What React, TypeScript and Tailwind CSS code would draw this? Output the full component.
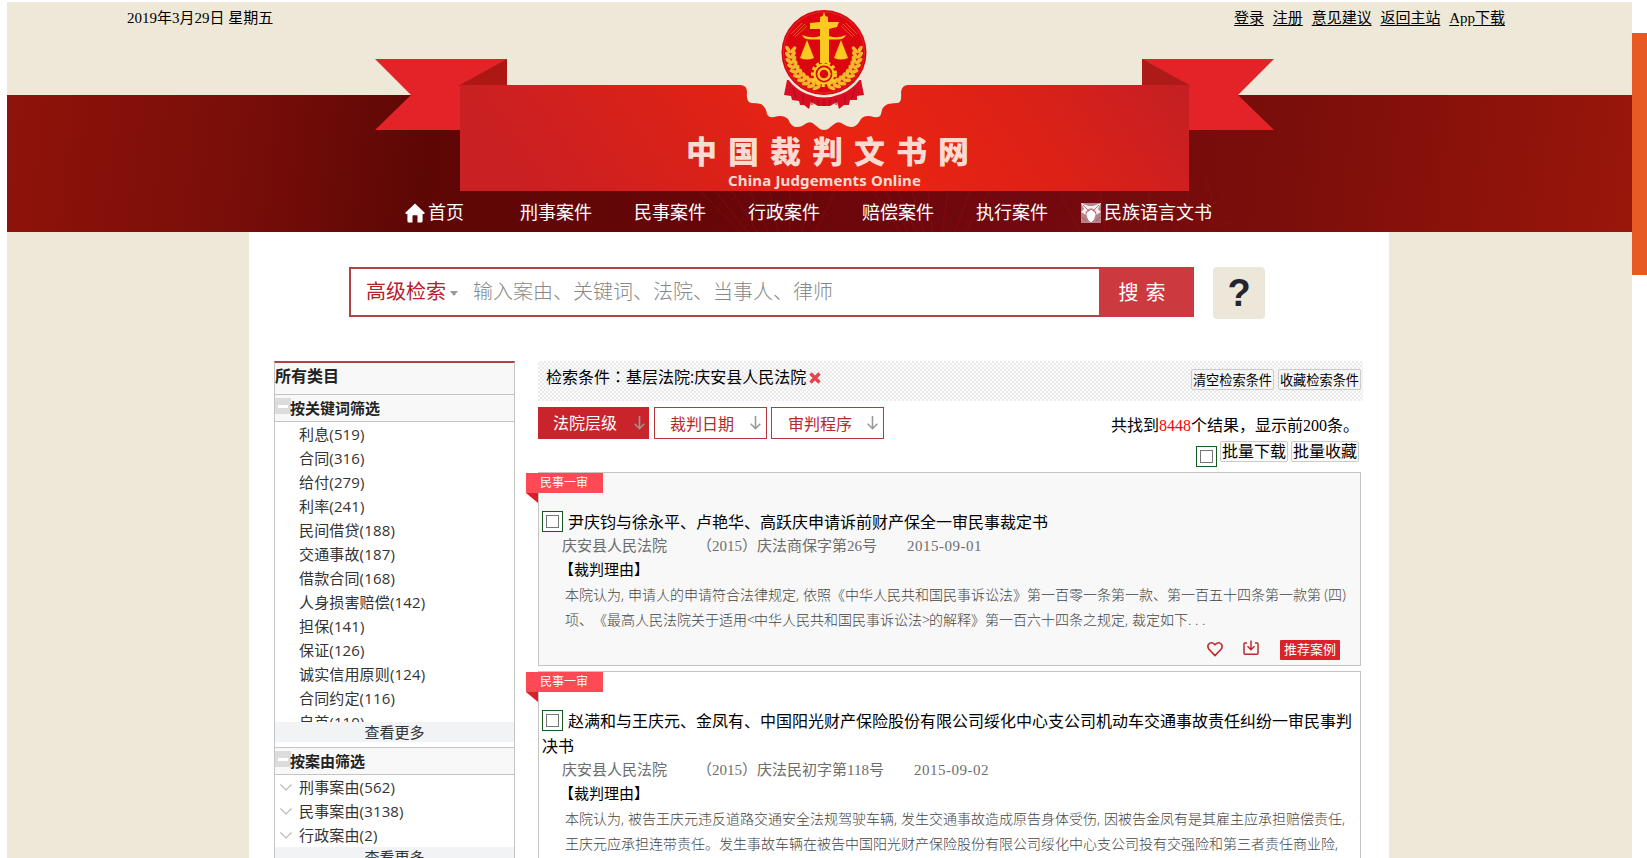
import { Fragment } from 'react';

const topLinks = ['登录', '注册', '意见建议', '返回主站', 'App下载'];

const navLinks = ['刑事案件', '民事案件', '行政案件', '赔偿案件', '执行案件'];

const keywords = [
  { name: '利息', count: 519 },
  { name: '合同', count: 316 },
  { name: '给付', count: 279 },
  { name: '利率', count: 241 },
  { name: '民间借贷', count: 188 },
  { name: '交通事故', count: 187 },
  { name: '借款合同', count: 168 },
  { name: '人身损害赔偿', count: 142 },
  { name: '担保', count: 141 },
  { name: '保证', count: 126 },
  { name: '诚实信用原则', count: 124 },
  { name: '合同约定', count: 116 },
  { name: '自首', count: 110 },
];

const causes = [
  { name: '刑事案由', count: 562 },
  { name: '民事案由', count: 3138 },
  { name: '行政案由', count: 2 },
];

const cases = [
  {
    title: ['尹庆钧与徐永平、卢艳华、高跃庆申请诉前财产保全一审民事裁定书'],
    court: '庆安县人民法院',
    number: '（2015）庆法商保字第26号',
    date: '2015-09-01',
    reason: [
      '本院认为,申请人的申请符合法律规定,依照《中华人民共和国民事诉讼法》第一百零一条第一款、第一百五十四条第一款第(四)',
      '项、《最高人民法院关于适用<中华人民共和国民事诉讼法>的解释》第一百六十四条之规定,裁定如下...',
    ],
    shaded: true,
  },
  {
    title: [
      '赵满和与王庆元、金凤有、中国阳光财产保险股份有限公司绥化中心支公司机动车交通事故责任纠纷一审民事判',
      '决书',
    ],
    court: '庆安县人民法院',
    number: '（2015）庆法民初字第118号',
    date: '2015-09-02',
    reason: [
      '本院认为,被告王庆元违反道路交通安全法规驾驶车辆,发生交通事故造成原告身体受伤,因被告金凤有是其雇主应承担赔偿责任,',
      '王庆元应承担连带责任。发生事故车辆在被告中国阳光财产保险股份有限公司绥化中心支公司投有交强险和第三者责任商业险,',
    ],
    shaded: false,
  },
];

const wheat = [0, 1, 2, 3, 4, 5, 6, 7, 8, 9];

function Emblem() {
  return (
    <g>
      {/* Drapery under the disc */}
      <path d="M787 80 L784 95 L791 96 L792 100 L799 101 L800 105 L804 105 L809 109 L811 102 L818 106 L830 106 L837 102 L839 109 L844 105 L849 105 L850 100 L857 100 L857 96 L864 95 L861 80 Z" fill="#d80f22" />
      <path d="M793 88 L796 98 M803 94 L803 103 M812 98 V105 M818 99 V105 M824 99 V106 M830 99 V105 M836 98 V105 M845 94 V103 M855 88 L852 98" stroke="#a80a1c" strokeWidth="1" fill="none" />
      <circle cx="824" cy="53" r="44.5" fill="#eee8d8" />
      <circle cx="824" cy="52.5" r="42.5" fill="#d9060f" />
      <circle cx="824" cy="52.5" r="40.5" fill="#dd0510" stroke="#e8413a" strokeWidth="0.6" />
      {/* Wheat ears */}
      {wheat.map((i) => (
        <g key={i} fill="#f3b82c">
          <ellipse cx="0" cy="0" rx="1.9" ry="4.2" transform={`translate(824 52.5) rotate(${192 + i * 9.2}) translate(0 -36) rotate(55)`} />
          <ellipse cx="0" cy="0" rx="1.9" ry="4.2" transform={`translate(824 52.5) rotate(${192 + i * 9.2}) translate(0 -31) rotate(125)`} />
          <ellipse cx="0" cy="0" rx="1.9" ry="4.2" transform={`translate(824 52.5) rotate(${168 - i * 9.2}) translate(0 -36) rotate(-55)`} />
          <ellipse cx="0" cy="0" rx="1.9" ry="4.2" transform={`translate(824 52.5) rotate(${168 - i * 9.2}) translate(0 -31) rotate(-125)`} />
        </g>
      ))}
      <path d="M793 36 L805 24 M795 37 L807 26 M791 34 L802 23 M855 36 L843 24 M853 37 L841 26 M857 34 L846 23" stroke="#ee6a28" strokeWidth="0.8" />
      {/* Pillar and scales */}
      <g fill="#fbc91f">
        <path d="M822.5 16 L824 12 L825.5 16 L828 17 V22 H834 L839 22 L837 27 L829 29 V63 H820 V29 L810 29 V23 L820 22 V17 Z" />
        <path d="M802 35 Q812 39 820 36 H829 Q837 39 846 35 Q844 40 836 39.5 H812 Q804 40 802 35 Z" />
        <path d="M807 40 L800 58 Q807 61 814 58 Z" />
        <path d="M841 40 L834 58 Q841 61 848 58 Z" />
      </g>
      <circle cx="824" cy="74" r="11.5" fill="none" stroke="#fbc91f" strokeWidth="3" strokeDasharray="3.2 2.5" />
      <circle cx="824" cy="74" r="9.5" fill="#dd0510" stroke="#fbc91f" strokeWidth="2.2" />
      <circle cx="824" cy="74" r="5.5" fill="#dd0510" stroke="#fbc91f" strokeWidth="2.4" />
    </g>
  );
}

function Ribbon() {
  return (
    <svg className="absolute top-0 left-0" width="1625" height="230" viewBox="7 2 1625 230" aria-hidden="true">
      <defs>
        <linearGradient id="ribbonBody" x1="0" x2="1" y1="0.1" y2="0">
          <stop offset="0" stopColor="#c92023" />
          <stop offset="0.25" stopColor="#d92119" />
          <stop offset="0.5" stopColor="#ea2411" />
          <stop offset="0.75" stopColor="#dc2117" />
          <stop offset="1" stopColor="#c41f24" />
        </linearGradient>
      </defs>
      {/* Faint firework rays */}
      <g stroke="#a3121a" strokeWidth="1" opacity="0.35">
        <path d="M700 191 L740 232 M715 191 L748 232 M732 191 L757 232 M750 191 L768 232 M770 191 L778 232 M790 191 V232 M812 191 L802 232 M835 191 L815 232" />
        <path d="M872 191 L900 232 M885 191 L908 232 M898 191 L916 232 M912 191 L924 232 M928 191 L932 232 M948 191 L942 232 M970 191 L955 232 M990 191 L965 232" />
        <path d="M1060 195 L1080 232 M1100 191 L1105 232 M1150 191 L1145 232 M1190 195 L1175 232 M1205 178 L1212 200 M1225 195 L1205 215 M1232 222 L1210 228" />
      </g>
      <path d="M375 59 H507 V86 H470 V130 H375 L411 95 Z" fill="#e32328" />
      <path d="M1274 59 H1142 V86 H1180 V130 H1274 L1238 95 Z" fill="#e32328" />
      <path d="M507 59 V86 H458 Z" fill="#ad1815" />
      <path d="M1142 59 V86 H1191 Z" fill="#ad1a18" />
      {/* Toothed notch around the emblem */}
      <rect x="740" y="84" width="168" height="60" fill="#eee8d8" />
      <path
        d="M460 85 H740 Q747 85 747 92 Q746 102 751 103 Q757 103 761 104 Q766 107 767 114 Q769 118 774 117 Q783 114 788 119 Q792 128 797 127 Q802 127 805 124 Q811 120 815 125 L820 129 Q824 131 828 129 L833 125 Q838 120 843 124 Q847 127 851 127 Q856 128 861 119 Q865 114 874 117 Q880 118 881 114 Q882 106 888 104 Q894 103 898 103 Q902 102 901 92 Q902 85 908 85 H1189 V191 H460 Z"
        fill="url(#ribbonBody)"
      />
      <Emblem />
    </svg>
  );
}

function HomeIcon() {
  return (
    <svg width="20" height="20" viewBox="0 0 20 20" fill="#fff">
      <path d="M10 0.5 L20 10 L18.8 11 H17.6 V18 Q17.6 19.5 16 19.5 H12.5 V13 Q12.5 12.3 11.8 12.3 H8.2 Q7.5 12.3 7.5 13 V19.5 H4 Q2.4 19.5 2.4 18 V11 H1.2 L0 10 Z" />
    </svg>
  );
}

function EthnicIcon() {
  return (
    <svg width="20" height="20" viewBox="0 0 20 20">
      <rect width="20" height="20" fill="#b5838a" />
      <path d="M0 0 L8 3 L12 3 L20 0 L17 6 L20 9 L15 12 L10 6 L5 12 L0 9 L3 6 Z" fill="#f8ecec" />
      <path d="M5 12 Q5 6 10 6 Q15 6 15 12 Q14 18 10 20 Q6 18 5 12 Z" fill="#fff" stroke="#a85560" strokeWidth="0.7" />
      <path d="M2 2 L8 8 M18 2 L12 8 M5 10 L10 6 L15 10 M1 14 L5 18 M19 14 L15 18" stroke="#a04450" strokeWidth="0.7" fill="none" />
    </svg>
  );
}

function CheckBox() {
  return (
    <span className="flex h-[21px] w-[21px] shrink-0 items-center justify-center border border-[#16591c] bg-white">
      <span className="h-[13px] w-[13px] border border-[#777]" />
    </span>
  );
}

function DownArrow() {
  return (
    <svg width="11" height="14" viewBox="0 0 11 14" fill="none" stroke="#999" strokeWidth="1.6">
      <path d="M5.5 0 V12.5 M0.7 7.7 L5.5 12.7 L10.3 7.7" />
    </svg>
  );
}

function GroupTitle({ children }: { children: string }) {
  return (
    <div className="flex h-[28px] border-y border-[#c4c4c4] bg-[#f8f8f8]">
      <span className="mt-[3px] flex h-4 w-4 items-center justify-center bg-[#dcdcdc]">
        <span className="h-[3px] w-[10px] bg-white" />
      </span>
      <h3 className="-ml-px text-[15px] leading-[26px] font-bold text-[#222]">{children}</h3>
    </div>
  );
}

function MoreBar() {
  return <div className="h-5 bg-[#f2f3f5] text-center text-[15px] leading-[20px] text-[#333]">查看更多</div>;
}

// ASCII punctuation takes exactly half of a Chinese character
function HalfWidth({ text }: { text: string }) {
  return (
    <>
      {text.split(/([,()<>.])/).map((part, i) =>
        i % 2 ? (
          <span key={i} className={`inline-block w-[0.5em] ${part === '(' ? 'text-right' : ''}`}>{part}</span>
        ) : (
          <Fragment key={i}>{part}</Fragment>
        ),
      )}
    </>
  );
}

function CaseCard({ item }: { item: (typeof cases)[number] }) {
  return (
    <article className={`relative w-[823px] border border-[#c4c4c4] ${item.shaded ? 'h-[194px] bg-[#f8f8f8]' : 'h-[240px] bg-white'}`}>
      <div className="absolute top-0 -left-[13px]">
        <div className="h-5 w-[77px] bg-[#ff4a56] pl-[14px] text-[12px] leading-[19px] text-white">民事一审</div>
        <svg width="12" height="10" viewBox="0 0 12 10">
          <path d="M0 0 H12 V10 Z" fill="#d81e2b" />
        </svg>
      </div>
      <h2 className="pt-[36px] pl-[3px] text-[16px] leading-[25px] whitespace-nowrap text-black">
        <span className="flex h-[26px] items-center gap-[5px]">
          <span className="mb-[2px]"><CheckBox /></span>
          {item.title[0]}
        </span>
        {item.title[1] && <span className="block">{item.title[1]}</span>}
      </h2>
      <div className="flex h-[21px] gap-[30px] pl-[23px] font-['Liberation_Serif','Noto_Sans_CJK_SC',serif] text-[15px] leading-[23px] text-[#6d6d6d] [text-spacing-trim:space-all]">
        <span>{item.court}</span>
        <span>{item.number}</span>
        <span className="tracking-[0.5px]">{item.date}</span>
      </div>
      <div className="pl-[20px] text-[15px] leading-[26px] text-black">【裁判理由】</div>
      <div className="pl-[26px] text-[14px] leading-[25px] font-light whitespace-nowrap text-[#444] [text-spacing-trim:space-all]">
        {item.reason.map((line) => (
          <p key={line}><HalfWidth text={line} /></p>
        ))}
      </div>
      {item.shaded && (
        <div className="mt-[8px] flex h-5 items-center justify-end pr-[20px]">
          <svg className="mr-[20px] mb-[2px]" width="16" height="16" viewBox="0 0 16 16" fill="none" stroke="#c0272d" strokeWidth="1.6">
            <path d="M8 14.6 L2 8.3 Q0 5.6 1.6 3.2 Q4.6 0 8 3.8 Q11.4 0 14.4 3.2 Q16 5.6 14 8.3 Z" />
          </svg>
          <svg className="mr-[21px] mb-[4px]" width="16" height="16" viewBox="0 0 16 16" fill="none" stroke="#c0272d" strokeWidth="1.5">
            <path d="M4 3 H1.8 Q1 3 1 4 V13.2 Q1 14.2 2 14.2 H14 Q15 14.2 15 13.2 V4 Q15 3 14.2 3 H12 M8 0.5 V9.5 M4.5 6.3 L8 9.8 L11.5 6.3" />
          </svg>
          <span className="h-5 w-[60px] rounded-[1px] bg-[#d9222a] text-center text-[13px] leading-[19px] text-white">推荐案例</span>
        </div>
      )}
    </article>
  );
}

export default function App() {
  return (
    <div className="flex h-[858px] w-[1647px] overflow-hidden bg-white pt-[2px] pl-[7px] font-['Open_Sans','Noto_Sans_CJK_SC',sans-serif]">
      <div className="h-[856px] w-[1625px] shrink-0 bg-[#eee8d8]">
        <header className="relative h-[230px]">
          <div className="flex h-[93px] justify-between pt-[5px] pr-[127px] pl-[120px] font-['Liberation_Serif','Noto_Sans_CJK_SC',serif] text-[15px] leading-[22px] text-black">
            <span>2019年3月29日 星期五</span>
            <div className="flex gap-[8.75px]">
              {topLinks.map((link) => (
                <a key={link} href="#" className="underline underline-offset-2">{link}</a>
              ))}
            </div>
          </div>
          <div className="h-[137px] bg-[linear-gradient(97deg,#8f130a_0%,#7a0e09_14%,#5d0705_26%,#680609_45%,#720810_62%,#7a0e0a_78%,#9a160b_100%)]" />
          <Ribbon />
          <div className="absolute inset-x-0 top-[128px] flex flex-col text-[#fadbd2]">
            <h1 className="pl-[679px] text-[31px] leading-[42px] font-black tracking-[11px]">中国裁判文书网</h1>
            <span className="pl-[721px] font-['Noto_Sans',sans-serif] text-[15px] leading-[17px] font-bold tracking-[0.15px]">China Judgements Online</span>
          </div>
          <nav className="absolute top-[199px] left-[398px] flex h-[23px] items-center text-[18px] leading-[23px] text-white">
            <a href="#" className="flex w-[115px] items-center gap-[3px]">
              <HomeIcon />
              首页
            </a>
            {navLinks.map((link) => (
              <a key={link} href="#" className="w-[114px]">{link}</a>
            ))}
            <a href="#" className="-ml-[9px] flex items-center gap-[3px]">
              <EthnicIcon />
              民族语言文书
            </a>
          </nav>
        </header>

        <main className="ml-[242px] h-[626px] w-[1140px] bg-white">
          {/* Search */}
          <div className="flex h-[129px] pt-[35px] pl-[100px]">
            <div className="flex h-[50px] w-[750px] items-center border-2 border-r-0 border-[#b04248] pl-[15px] text-[20px]">
              <span className="text-[#b3202c]">高级检索</span>
              <span className="mt-[2px] ml-1 border-x-4 border-t-[5px] border-x-transparent border-t-[#999]" />
              <span className="ml-[15px] font-light text-[#888]">输入案由、关键词、法院、当事人、律师</span>
            </div>
            <button className="h-[50px] w-[95px] bg-[#cc3a3f] pt-[2px] pr-[8px] text-[20px] tracking-[1px] text-white">搜 索</button>
            <button className="ml-[19px] h-[52px] w-[52px] rounded-[4px] bg-[#ece7d9] font-['Liberation_Sans',sans-serif] text-[38px] leading-[52px] font-bold text-[#24242f]">?</button>
          </div>

          <div className="flex pl-[25px]">
            <aside className="h-[520px] w-[241px] shrink-0 border-x border-[#c4c4c4] border-t-2 border-t-[#b04248]">
              <h3 className="h-[31px] bg-[#f8f8f8] text-[16px] leading-[27px] font-bold text-[#222]">所有类目</h3>
              <GroupTitle>按关键词筛选</GroupTitle>
              <ul className="h-[300px] overflow-hidden pl-6 text-[15px] leading-6 tracking-[0.15px] text-[#333]">
                {keywords.map((item) => (
                  <li key={item.name}>{item.name}({item.count})</li>
                ))}
              </ul>
              <MoreBar />
              <div className="h-[5px]" />
              <GroupTitle>按案由筛选</GroupTitle>
              <ul className="h-[72px] text-[15px] leading-6 tracking-[0.15px] text-[#333]">
                {causes.map((item) => (
                  <li key={item.name} className="flex items-center">
                    <svg className="mr-[7px] ml-[5px]" width="12" height="7" viewBox="0 0 12 7" fill="none" stroke="#bbb" strokeWidth="1.2">
                      <path d="M0.5 0.5 L6 6 L11.5 0.5" />
                    </svg>
                    {item.name}({item.count})
                  </li>
                ))}
              </ul>
              <MoreBar />
            </aside>

            <section className="ml-[23px] w-[825px]">
              <div className="flex h-10 justify-between bg-[repeating-conic-gradient(#ebebeb_0_25%,#fbfbfb_0_50%)] bg-size-[4px_4px] pl-2">
                <div className="flex h-[31px] items-center text-[16px] text-black">
                  <span>
                    检索条件<span className="font-['Noto_Sans_CJK_TC',sans-serif]">：</span>基层法院:庆安县人民法院
                  </span>
                  <svg className="mt-[2px] ml-[3px]" width="12" height="12" viewBox="0 0 12 12" stroke="#e8434a" strokeWidth="3.4">
                    <path d="M1.5 1.5 L10.5 10.5 M10.5 1.5 L1.5 10.5" />
                  </svg>
                </div>
                <div className="flex gap-1 pt-2 pr-[2px] text-[13.2px] leading-[20px] text-black">
                  <button className="h-[21px] w-[83px] rounded-[2px] border border-[#ccc] bg-[#f5f5f5] whitespace-nowrap">清空检索条件</button>
                  <button className="h-[21px] w-[83px] rounded-[2px] border border-[#ccc] bg-[#f5f5f5] whitespace-nowrap">收藏检索条件</button>
                </div>
              </div>

              <div className="flex h-[71px] justify-between pt-[6px]">
                <div className="flex h-8 text-[16px] leading-[32px]">
                  <div className="flex w-[111px] items-center justify-between bg-[#c9242b] pr-1 pl-[15px] text-white">
                    法院层级
                    <DownArrow />
                  </div>
                  <div className="ml-[5px] flex w-[113px] items-center justify-between border border-[#b8353b] pr-[5px] pl-[15px] text-[#b8282f]">
                    <span className="pt-[2px]">裁判日期</span>
                    <DownArrow />
                  </div>
                  <div className="ml-1 flex w-[113px] items-center justify-between border border-[#b8353b] pr-[5px] pl-4 text-[#b8282f]">
                    <span className="pt-[2px]">审判程序</span>
                    <DownArrow />
                  </div>
                </div>
                <div className="flex flex-col items-end pr-1 font-['Liberation_Serif','Noto_Sans_CJK_SC',serif] text-[16px] text-black">
                  <p className="h-[34px] leading-[38px]">
                    共找到<span className="text-[#f00]">8448</span>个结果，显示前200条。
                  </p>
                  <div className="flex gap-[3px] leading-[19px]">
                    <div className="pt-[5px]"><CheckBox /></div>
                    <button className="h-[21px] w-[68px] rounded-[2px] border border-[#ccc] bg-[#fbfbfb]">批量下载</button>
                    <button className="h-[21px] w-[68px] rounded-[2px] border border-[#ccc] bg-[#fbfbfb]">批量收藏</button>
                  </div>
                </div>
              </div>

              <div className="flex flex-col gap-[5px]">
                {cases.map((item) => (
                  <CaseCard key={item.number} item={item} />
                ))}
              </div>
            </section>
          </div>
        </main>
      </div>
      <div className="mt-[31px] h-[242px] w-[15px] bg-[#e85a24]" />
    </div>
  );
}
